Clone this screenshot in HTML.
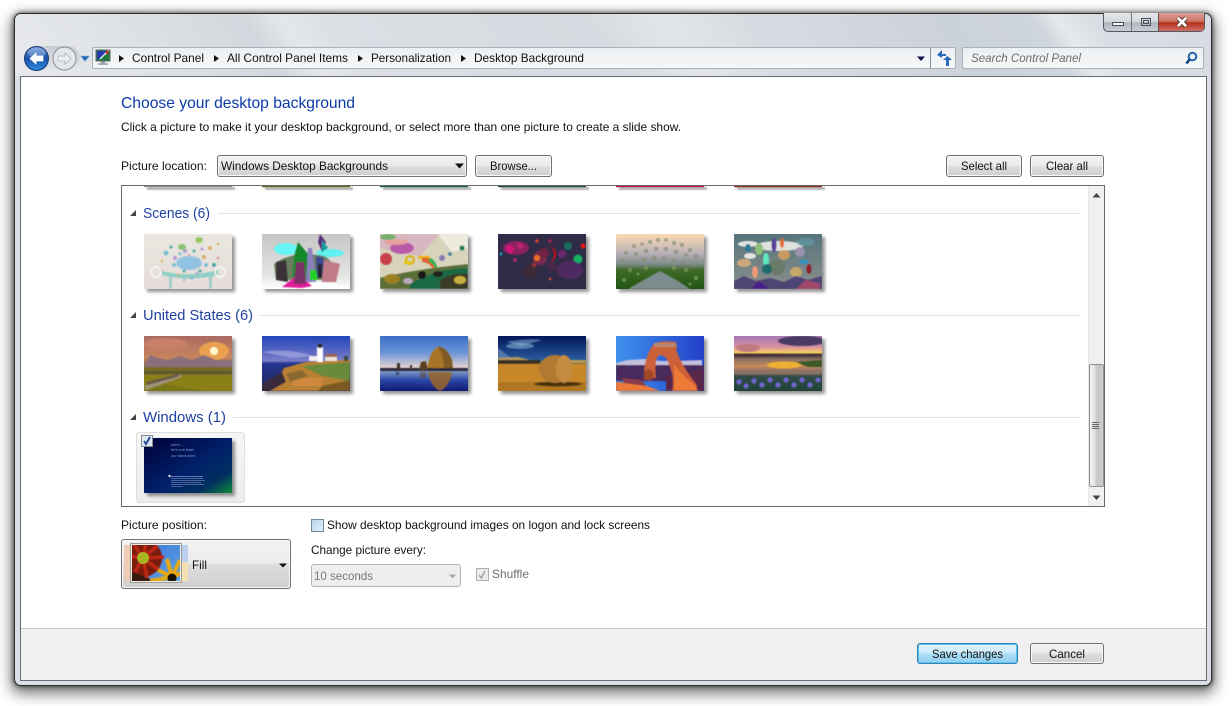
<!DOCTYPE html>
<html><head><meta charset="utf-8"><title>Desktop Background</title>
<style>
html,body{margin:0;padding:0;width:1232px;height:706px;overflow:hidden;background:#fff}
.a{position:absolute;box-sizing:border-box}
#win{left:14px;top:13px;width:1198px;height:673px;border:1px solid #2b2b2b;border-radius:7px;background:#d9dfe5;box-shadow:0 0 4px 1px rgba(0,0,0,.5),0 5px 14px 3px rgba(0,0,0,.5)}
#glass{left:15px;top:14px;width:1196px;height:62px;border-radius:6px 6px 0 0;
background:linear-gradient(55deg,#e6e8eb 2%,#d9dde2 16.600%,#d2d7dd 21.500%,#e4e7ea 24.700%,#dcdfe4 28%,#d6dbe1 49%,#e2e5e8 55.400%,#d8dce2 62%,#ccd2d9 78%,#cfd5dc 85.300%,#e6e9ec 87.300%,#d9dee4 90%,#d6dce2 98%)}
#content{left:20px;top:76px;width:1187px;height:605px;background:#fff;border:1px solid #656b70}
#foot{left:21px;top:628px;width:1185px;height:52px;background:#f0f0f0;border-top:1px solid #c4c4c4}
.btn{border:1px solid #707070;border-radius:3px;background:linear-gradient(#f2f2f2 0,#ebebeb 48%,#dddddd 52%,#cfcfcf 100%);box-shadow:inset 0 0 0 1px #f8f8f8}
#save{border-color:#3c7fb1;background:linear-gradient(#e3f4fc 0,#c9e9f9 48%,#a9dcf5 52%,#92cff0 100%);box-shadow:inset 0 0 0 1px #52c5f2}
#list{left:121px;top:185px;width:984px;height:322px;border:1px solid #6a6a6a;background:#fff;overflow:hidden}
#caps{left:1103px;top:13px;width:102px;height:19px;border:1px solid #545a60;border-top:0;border-radius:0 0 5px 5px;overflow:hidden;background:linear-gradient(#e4e7ea,#d3d8dd 50%,#b0b7bf 52%,#c9ced4)}
#close{left:54px;top:0;width:46px;height:18px;background:linear-gradient(#dba097 0,#cf7468 45%,#b5301d 55%,#d27166 100%);border-left:1px solid #6a4a48}
#sep{left:27px;top:0;width:1px;height:18px;background:#6f767c}
#addr{left:92px;top:47px;width:864px;height:22px;border:1px solid #a9b0b7;border-radius:2px;background:linear-gradient(#eceff2,#f6f7f8)}
#search{left:962px;top:47px;width:242px;height:22px;border:1px solid #a9b0b7;border-radius:2px;background:linear-gradient(#eceff2,#f6f7f8)}
#navbg{left:24px;top:46px;width:56px;height:24px;border-radius:12px;background:linear-gradient(#c6ccd3,#e2e5e9)}
#sel{left:136px;top:432px;width:109px;height:71px;border:1px solid #dedede;border-radius:3px;background:linear-gradient(#f6f6f6,#ececec)}
#combo{left:217px;top:155px;width:250px;height:22px}
#pos{left:121px;top:539px;width:170px;height:50px}
#dis{left:311px;top:564px;width:150px;height:23px;border:1px solid #b4b4b4;border-radius:3px;background:#eeeeee}
#track{left:1088px;top:186px;width:16px;height:320px;background:#f0f0f0;border-left:1px solid #e6e6e6}
#thumb{left:1089px;top:364px;width:15px;height:123px;border:1px solid #8e8f8f;border-radius:2px;background:linear-gradient(90deg,#f3f3f3 0,#e7e7e7 30%,#c9c9c9 50%,#c6c6c6 85%,#d8d8d8 100%)}
svg{position:absolute;left:0;top:0}
text{font-family:"Liberation Sans",sans-serif;font-size:12px;fill:#111}
.h{font-size:15px;fill:#1f3f9f}
</style></head><body>
<div class="a" id="win"></div>
<div class="a" id="glass"></div>
<div class="a" id="caps"><div class="a" id="sep"></div><div class="a" id="close"></div></div>
<div class="a" id="navbg"></div>
<div class="a" id="addr"></div>
<div class="a" id="search"></div>
<div class="a" id="content"></div>
<div class="a" id="foot"></div>
<div class="a btn" id="combo"></div>
<div class="a btn" style="left:475px;top:155px;width:77px;height:22px"></div>
<div class="a btn" style="left:946px;top:155px;width:76px;height:22px"></div>
<div class="a btn" style="left:1030px;top:155px;width:74px;height:22px"></div>
<div class="a" id="list"></div>
<div class="a" id="track"></div>
<div class="a" id="thumb"></div>
<div class="a" id="sel"></div>
<div class="a btn" id="pos"></div>
<div class="a" id="dis"></div>
<div class="a btn" id="save" style="left:917px;top:643px;width:101px;height:21px"></div>
<div class="a btn" style="left:1030px;top:643px;width:74px;height:21px"></div>

<svg width="1232" height="706" viewBox="0 0 1232 706">
<defs>
<filter id="b" x="-20%" y="-20%" width="140%" height="140%"><feGaussianBlur stdDeviation="0.6"/></filter>
<filter id="b2" x="-30%" y="-30%" width="160%" height="160%"><feGaussianBlur stdDeviation="1.6"/></filter>
<clipPath id="c"><rect width="88" height="55"/></clipPath>
<clipPath id="lc"><rect x="122" y="186" width="966" height="320"/></clipPath>
<clipPath id="pc"><rect x="132" y="545" width="48" height="36"/></clipPath>
<linearGradient id="s1" x1="0" y1="0" x2="0" y2="1"><stop offset="0" stop-color="#e9e7e0"/><stop offset="1" stop-color="#e6dcd9"/></linearGradient>
<linearGradient id="s2" x1="0" y1="0" x2="0" y2="1"><stop offset="0" stop-color="#c6c6c4"/><stop offset=".75" stop-color="#e4e4e2"/><stop offset="1" stop-color="#fff"/></linearGradient>
<linearGradient id="s5" x1="0" y1="0" x2="0" y2="1"><stop offset="0" stop-color="#fcdcb0"/><stop offset=".35" stop-color="#b8b0b8"/><stop offset=".55" stop-color="#7f8a88"/><stop offset=".65" stop-color="#3f6a2a"/><stop offset="1" stop-color="#1f5512"/></linearGradient>
<linearGradient id="u1" x1="0" y1="0" x2="0" y2="1"><stop offset="0" stop-color="#a96a62"/><stop offset=".4" stop-color="#c9855f"/><stop offset=".55" stop-color="#8c6a48"/><stop offset="1" stop-color="#8a7a1a"/></linearGradient>
<linearGradient id="u2" x1="0" y1="0" x2="0" y2="1"><stop offset="0" stop-color="#2246b8"/><stop offset=".45" stop-color="#7b7cc8"/><stop offset=".5" stop-color="#25348e"/><stop offset="1" stop-color="#1f2a60"/></linearGradient>
<linearGradient id="u3" x1="0" y1="0" x2="0" y2="1"><stop offset="0" stop-color="#3b6fc4"/><stop offset=".3" stop-color="#6a94d8"/><stop offset=".58" stop-color="#e4d4d0"/><stop offset=".64" stop-color="#7f9ac8"/><stop offset=".8" stop-color="#2a48a8"/><stop offset="1" stop-color="#101a70"/></linearGradient>
<linearGradient id="u4" x1="0" y1="0" x2="0" y2="1"><stop offset="0" stop-color="#02175a"/><stop offset=".45" stop-color="#2c5da0"/><stop offset=".5" stop-color="#8a6a30"/><stop offset="1" stop-color="#c08024"/></linearGradient>
<linearGradient id="u5" x1="0" y1="0" x2="1" y2="0"><stop offset="0" stop-color="#3f92ee"/><stop offset="1" stop-color="#2240c8"/></linearGradient>
<linearGradient id="u6" x1="0" y1="0" x2="0" y2="1"><stop offset="0" stop-color="#a67ab8"/><stop offset=".2" stop-color="#d890a0"/><stop offset=".3" stop-color="#f8d060"/><stop offset=".34" stop-color="#3a2a34"/><stop offset=".42" stop-color="#8a7060"/><stop offset=".55" stop-color="#c88a5a"/><stop offset=".7" stop-color="#5a5a70"/><stop offset="1" stop-color="#1a3a30"/></linearGradient>
<linearGradient id="w1" x1="0" y1="0" x2="1" y2="1"><stop offset="0" stop-color="#000038"/><stop offset=".55" stop-color="#00206a"/><stop offset=".8" stop-color="#00305f"/><stop offset="1" stop-color="#0f8a3a"/></linearGradient>
<linearGradient id="g6" x1="0" y1="0" x2="0" y2="1"><stop offset="0" stop-color="#56757c"/><stop offset="1" stop-color="#8a8f8c"/></linearGradient>
<linearGradient id="posb" x1="0" y1="0" x2="1" y2="1"><stop offset="0" stop-color="#3f78d8"/><stop offset="1" stop-color="#5aa0e8"/></linearGradient>
<linearGradient id="cb" x1="0" y1="0" x2="1" y2="1"><stop offset="0" stop-color="#b8d4ee"/><stop offset="1" stop-color="#e4f0fa"/></linearGradient>
<linearGradient id="bk" x1="0" y1="0" x2="0" y2="1"><stop offset="0" stop-color="#5f94d8"/><stop offset=".5" stop-color="#1a4fa8"/><stop offset="1" stop-color="#2f8de0"/></linearGradient>

<g id="shadow"><rect x="3" y="3" width="88" height="55" fill="#000" opacity=".42" filter="url(#b2)"/></g>

<g id="t1"><use href="#shadow"/><g clip-path="url(#c)"><rect width="88" height="55" fill="url(#s1)"/><g filter="url(#b)">
<ellipse cx="45" cy="29" rx="13" ry="7" fill="#93c3e2"/><ellipse cx="38" cy="13" rx="4" ry="3" fill="#8cc478"/><ellipse cx="55" cy="6" rx="4" ry="3" fill="#9cc86a"/>
<rect x="25" y="40" width="3" height="15" fill="#a4cdc9"/><rect x="65" y="40" width="3" height="15" fill="#a4cdc9"/><path d="M18 37Q45 44 74 36V41Q45 48 18 41Z" fill="#8fcfc4"/>
<g fill="#7ac0d8"><circle cx="22" cy="19" r="2.500"/><circle cx="30" cy="31" r="2"/><circle cx="36" cy="20" r="1.500"/><circle cx="62" cy="31" r="2"/><circle cx="48" cy="44" r="1.500"/><circle cx="40" cy="46" r="1.200"/></g>
<g fill="#d8b060"><circle cx="66" cy="14" r="2"/><circle cx="60" cy="23" r="2"/><circle cx="74" cy="10" r="1.200"/><circle cx="18" cy="27" r="1.300"/><circle cx="34" cy="41" r="1.200"/></g>
<g fill="#b09cd0"><circle cx="31" cy="24" r="2"/><circle cx="41" cy="17" r="2"/><circle cx="58" cy="15" r="1.500"/><circle cx="53" cy="39" r="1.300"/></g>
<g fill="#e0a0a8"><circle cx="17" cy="36" r="1.500"/><circle cx="74" cy="24" r="1.500"/><circle cx="45" cy="21" r="1.300"/></g>
<g fill="#50a8a0"><circle cx="50" cy="17" r="1.500"/><circle cx="27" cy="13" r="1.500"/><circle cx="70" cy="31" r="2"/><circle cx="40" cy="37" r="1.500"/><circle cx="56" cy="37" r="1.500"/></g>
<circle cx="12" cy="38" r="5" fill="none" stroke="#f8f6f2" stroke-width="1.500"/><circle cx="76" cy="38" r="5" fill="none" stroke="#f8f6f2" stroke-width="1.500"/>
</g></g></g>

<g id="t2"><use href="#shadow"/><g clip-path="url(#c)"><rect width="88" height="55" fill="url(#s2)"/><g filter="url(#b)">
<ellipse cx="24" cy="15" rx="12" ry="6" fill="#66f4f4"/><ellipse cx="68" cy="19" rx="14" ry="4" fill="#60f0f0"/>
<path d="M12 30Q30 16 62 22 74 28 72 46L14 46Z" fill="#6a7f60"/><path d="M36 8L46 20 50 46 30 46 32 22Z" fill="#16882c"/><path d="M58 0L64 8 60 18 56 8Z" fill="#5a2a78"/><path d="M60 6L66 14 60 18Z" fill="#10a0a0"/>
<path d="M46 14L50 14 54 48 44 48Z" fill="#8a80c0"/><path d="M14 28L24 26 26 48 14 46Z" fill="#3a3038"/><path d="M62 26L78 30 74 48 60 48Z" fill="#c07a88"/><path d="M54 22L62 24 60 44 54 44Z" fill="#3a4a8a"/>
<path d="M24 50L36 40 50 52 40 54 20 53Z" fill="#e01a9a"/><path d="M34 28L42 28 44 50 32 50Z" fill="#7a3068"/><path d="M48 36L54 36 56 46 48 46Z" fill="#20d020"/><path d="M50 48L72 50 84 53 50 54Z" fill="#fff"/><path d="M56 30L60 30 60 44 56 44Z" fill="#2a2030"/>
</g></g></g>

<g id="t3"><use href="#shadow"/><g clip-path="url(#c)"><rect width="88" height="55" fill="#d8d4bc"/><g filter="url(#b)">
<path d="M0 0H60L40 22 14 18 0 14Z" fill="#d8b8c0"/><path d="M58 0H88V14L72 18Z" fill="#eeeadd"/><ellipse cx="22" cy="14" rx="12" ry="6" fill="#b95aa8"/><ellipse cx="16" cy="8" rx="12" ry="3" fill="#e8a0a0"/><ellipse cx="8" cy="3" rx="8" ry="3" fill="#78b070"/>
<circle cx="6" cy="25" r="6" fill="#c84048"/><circle cx="30" cy="26" r="4" fill="none" stroke="#d8b010" stroke-width="2"/><rect x="24" y="27" width="7" height="3" fill="#e8c818"/><rect x="38" y="22" width="12" height="3" fill="#f0b018"/>
<path d="M42 24Q54 22 58 36L54 37Q50 28 42 28Z" fill="#e06030"/><path d="M50 24Q56 26 58 36L56 36Q54 30 48 27Z" fill="#30b050"/>
<path d="M0 44Q30 36 88 30V55H0Z" fill="#5a7038"/><path d="M30 50Q56 34 88 34V55H30Z" fill="#1c6a44"/><path d="M60 46Q72 38 88 40V55H60Z" fill="#3a3a28"/><ellipse cx="42" cy="41" rx="4" ry="4" fill="#181818"/><ellipse cx="58" cy="40" rx="5" ry="3" fill="#20201c"/>
<ellipse cx="12" cy="45" rx="8" ry="5" fill="#9a8020"/><ellipse cx="80" cy="46" rx="6" ry="4" fill="#c8b040"/><ellipse cx="28" cy="47" rx="5" ry="3" fill="#b8a8c0"/><circle cx="82" cy="14" r="2.500" fill="#1a7a50"/><circle cx="62" cy="24" r="3" fill="#8a7ab0"/><circle cx="70" cy="20" r="2" fill="#5a8aa0"/>
</g></g></g>

<g id="t4"><use href="#shadow"/><g clip-path="url(#c)"><rect width="88" height="55" fill="#302c48"/><g filter="url(#b)">
<ellipse cx="18" cy="14" rx="13" ry="7" fill="#8a2060"/><circle cx="12" cy="15" r="4" fill="#d01878"/><circle cx="22" cy="12" r="3" fill="#c02068"/><circle cx="42" cy="24" r="7" fill="#7a2a50"/><path d="M50 12A8 8 0 1 1 50 28 6 8 0 0 0 50 12Z" fill="#d81010"/><circle cx="46" cy="19" r="5" fill="#702040"/>
<circle cx="70" cy="12" r="4" fill="#1a6a60"/><circle cx="80" cy="25" r="4.500" fill="#18b060"/><circle cx="85" cy="12" r="2.500" fill="#e81818"/><circle cx="64" cy="20" r="4" fill="#6a2a70"/><circle cx="39" cy="24" r="3" fill="#f07020"/><circle cx="54" cy="32" r="5" fill="#4a2a4a"/>
<ellipse cx="72" cy="36" rx="13" ry="9" fill="#4f2a62"/><circle cx="32" cy="38" r="7" fill="#3a2a38"/><circle cx="36" cy="31" r="2.500" fill="#8a3030"/><circle cx="52" cy="7" r="1.800" fill="#a02050"/><circle cx="39" cy="7" r="1.800" fill="#d04040"/><circle cx="3" cy="20" r="1.500" fill="#2090b0"/><circle cx="52" cy="45" r="1.300" fill="#e05030"/><circle cx="17" cy="26" r="2" fill="#a02a70"/>
</g></g></g>

<g id="t5"><use href="#shadow"/><g clip-path="url(#c)"><rect width="88" height="55" fill="url(#s5)"/><g filter="url(#b)">
<g fill="#8a8f78" opacity=".75"><circle cx="18" cy="12" r="2"/><circle cx="26" cy="10" r="1.800"/><circle cx="34" cy="8" r="2"/><circle cx="42" cy="6" r="2"/><circle cx="50" cy="6" r="1.800"/><circle cx="58" cy="9" r="2"/><circle cx="66" cy="11" r="2"/><circle cx="74" cy="16" r="2"/><circle cx="10" cy="19" r="2"/><circle cx="20" cy="20" r="2.200"/><circle cx="30" cy="17" r="2.200"/><circle cx="40" cy="15" r="2"/><circle cx="50" cy="15" r="2.200"/><circle cx="60" cy="18" r="2.200"/><circle cx="70" cy="21" r="2"/><circle cx="80" cy="22" r="2"/><circle cx="6" cy="27" r="2"/><circle cx="16" cy="28" r="2"/><circle cx="28" cy="26" r="2.500"/><circle cx="38" cy="24" r="2.500"/><circle cx="48" cy="25" r="2.500"/><circle cx="58" cy="27" r="2.500"/><circle cx="68" cy="28" r="2"/><circle cx="78" cy="30" r="2"/></g>
<path d="M44 37L62 47 74 55H12L26 47Z" fill="#7d8c8c"/><g fill="#7f9a58" opacity=".8"><circle cx="14" cy="36" r="2"/><circle cx="70" cy="36" r="2"/><circle cx="80" cy="44" r="2"/><circle cx="8" cy="46" r="2"/><circle cx="30" cy="34" r="2"/><circle cx="58" cy="34" r="2"/><circle cx="74" cy="50" r="1.500"/><circle cx="22" cy="40" r="1.500"/></g>
</g></g></g>

<g id="t6"><use href="#shadow"/><g clip-path="url(#c)"><rect width="88" height="55" fill="url(#g6)"/><g filter="url(#b)">
<ellipse cx="45" cy="12" rx="24" ry="5" fill="#dfe2dc"/><ellipse cx="14" cy="10" rx="10" ry="3" fill="#e2e6e2"/><ellipse cx="72" cy="8" rx="9" ry="4" fill="#5f8f98"/>
<ellipse cx="25" cy="15" rx="4" ry="6" fill="#8cbf78"/><ellipse cx="40" cy="11" rx="2.500" ry="7" fill="#5a3f9a"/><ellipse cx="48" cy="9" rx="2" ry="5" fill="#e86a30"/><ellipse cx="21" cy="38" rx="3" ry="6" fill="#f09a78"/><ellipse cx="32" cy="26" rx="3" ry="7" fill="#60e8c0"/><circle cx="43" cy="33" r="8" fill="#6a7a68"/><circle cx="33" cy="35" r="5" fill="#1a6a6a"/><ellipse cx="50" cy="21" rx="6" ry="5" fill="#c89a60"/><ellipse cx="66" cy="18" rx="5" ry="5" fill="#9a92b0"/><ellipse cx="75" cy="35" rx="2.500" ry="5" fill="#8a2028"/><ellipse cx="62" cy="38" rx="6" ry="5" fill="#c8a868"/><ellipse cx="10" cy="29" rx="7" ry="4" fill="#caa878"/><ellipse cx="16" cy="22" rx="6" ry="3" fill="#e4e4dc"/><ellipse cx="70" cy="28" rx="5" ry="2.500" fill="#3a90c0"/><ellipse cx="14" cy="14" rx="3" ry="4" fill="#2a7a98"/>
<path d="M0 55V47L10 42 22 47 36 44 50 48 62 42 74 46 88 42V55Z" fill="#4f4474"/><path d="M62 55L72 46 86 50V55Z" fill="#a04a6a"/><path d="M18 55L24 47 36 55Z" fill="#4a1f88"/>
</g></g></g>

<g id="a1"><use href="#shadow"/><g clip-path="url(#c)"><rect width="88" height="55" fill="url(#u1)"/><g filter="url(#b)">
<ellipse cx="22" cy="8" rx="22" ry="6" fill="#c88068"/><ellipse cx="70" cy="15" rx="15" ry="9" fill="#eaa050"/><circle cx="70" cy="15" r="4" fill="#fff8d0"/>
<path d="M0 30L6 19 14 22 24 24 36 20 48 24 60 19 72 24 88 24V32H0Z" fill="#8a6f7c"/><rect y="31" width="88" height="6" fill="#7a6a28"/><rect y="35" width="88" height="3" fill="#5a5a28"/><rect y="39" width="88" height="16" fill="#8a8018"/>
<path d="M0 50L36 38 38 41 2 54Z" fill="#a09478"/><path d="M2 46L34 38 36 40 4 49Z" fill="#6a5a48"/><path d="M0 55L20 48 60 55Z" fill="#6a6a18" opacity=".5"/>
</g></g></g>

<g id="a2"><use href="#shadow"/><g clip-path="url(#c)"><rect width="88" height="55" fill="url(#u2)"/><g filter="url(#b)">
<path d="M0 16Q30 12 50 20L30 22Z" fill="#a0a8e0" opacity=".7"/>
<path d="M0 55L12 50 22 32 44 26 88 24V55Z" fill="#b88030"/><path d="M40 30L88 26V45L60 40Z" fill="#6a8a3a"/><path d="M0 48L20 36 24 46 8 55H0Z" fill="#3a2a3a"/><path d="M30 42H60V50H30Z" fill="#d08a40"/><path d="M24 38L40 34 46 40 28 46Z" fill="#8a6a30"/><path d="M60 50L88 44V55H56Z" fill="#7a5a24"/>
<rect x="55" y="11" width="6" height="15" fill="#fff"/><rect x="56" y="8" width="4" height="4" fill="#302020"/><rect x="47" y="20" width="9" height="5" fill="#eee"/><rect x="63" y="18" width="12" height="7" fill="#a06050"/><rect x="63" y="21" width="12" height="4" fill="#ece4dc"/><rect x="82" y="20" width="4" height="5" fill="#3a4a3a"/>
</g></g></g>

<g id="a3"><use href="#shadow"/><g clip-path="url(#c)"><rect width="88" height="55" fill="url(#u3)"/><g filter="url(#b)">
<path d="M47 33Q50 14 58 11 66 10 72 24L73 33Z" fill="#a87426"/><path d="M58 11Q66 10 72 24L73 33H64Q64 20 58 11Z" fill="#7f5a20"/>
<path d="M48 36Q50 50 60 55 70 50 72 36Z" fill="#9a6424" opacity=".85"/><rect y="32" width="88" height="3" fill="#2a2a3a"/><rect x="17" y="27" width="3" height="7" fill="#3a3028"/><rect x="30" y="29" width="2" height="5" fill="#3a3028"/><path d="M39 34L41 26 46 25 48 34Z" fill="#5a4020"/><rect x="40" y="36" width="6" height="6" fill="#5a4020" opacity=".5"/><rect x="16" y="36" width="3" height="3" fill="#2a2a3a" opacity=".6"/>
</g></g></g>

<g id="a4"><use href="#shadow"/><g clip-path="url(#c)"><rect width="88" height="55" fill="url(#u4)"/><g filter="url(#b)">
<path d="M8 6Q30 2 44 4L24 10Z" fill="#7aa0c8" opacity=".6"/><ellipse cx="22" cy="10" rx="14" ry="3" fill="#8ab0d0" opacity=".6"/><path d="M0 12L16 24H0Z" fill="#7a9ac0" opacity=".55"/>
<path d="M0 22L20 21 40 26H0Z" fill="#b89a58"/><path d="M0 24H42V28H0Z" fill="#3a3028"/><path d="M72 24H88V27H72Z" fill="#b89a58"/><rect y="28" width="88" height="27" fill="#c8882a"/><rect y="46" width="88" height="9" fill="#b07820"/>
<ellipse cx="60" cy="48" rx="24" ry="2.500" fill="#4a3010"/><ellipse cx="57" cy="33" rx="16" ry="14" fill="#b07a30"/><ellipse cx="66" cy="33" rx="8" ry="14" fill="#c48c40"/>
</g></g></g>

<g id="a5"><use href="#shadow"/><g clip-path="url(#c)"><rect width="88" height="55" fill="url(#u5)"/><g filter="url(#b)">
<path d="M0 27L12 24 30 23 44 25 60 25 86 24V31H0Z" fill="#c4c0dc"/><rect y="29" width="88" height="16" fill="#4a2a5c"/><path d="M50 40L88 34V55H50Z" fill="#5a2548"/><path d="M0 46L26 48 44 55H0Z" fill="#ec7a3a"/><path d="M6 42L26 44 30 50 8 47Z" fill="#8a3a48"/>
<path d="M28 41Q28 20 38 8 44 4 60 6 62 12 60 14 66 30 80 48L82 55H56Q60 40 50 22 46 18 42 20 38 28 40 42Z" fill="#cc6038"/><path d="M58 28Q66 40 80 50V55H58Z" fill="#ee7a38"/><path d="M38 7H60V11H38Z" fill="#b88870"/><path d="M28 36Q34 30 38 38L36 44H28Z" fill="#a04828"/>
</g></g></g>

<g id="a6"><use href="#shadow"/><g clip-path="url(#c)"><rect width="88" height="55" fill="url(#u6)"/><g filter="url(#b)">
<ellipse cx="68" cy="5" rx="24" ry="5" fill="#4a3a62"/><ellipse cx="14" cy="12" rx="12" ry="4" fill="#c07a80"/><ellipse cx="50" cy="29" rx="17" ry="3.500" fill="#eeb030"/><path d="M62 26L88 24V31H74Z" fill="#3a5a28"/><path d="M0 20H50L30 19Z" fill="#3a2a34"/>
<rect y="38" width="88" height="17" fill="#24483a" opacity=".75"/><g fill="#6f66d0"><circle cx="5" cy="46" r="2.500"/><circle cx="12" cy="50" r="2.500"/><circle cx="20" cy="45" r="2.500"/><circle cx="28" cy="49" r="2.500"/><circle cx="36" cy="44" r="2.500"/><circle cx="44" cy="49" r="2.500"/><circle cx="52" cy="44" r="2.500"/><circle cx="60" cy="49" r="2.500"/><circle cx="68" cy="44" r="2.500"/><circle cx="76" cy="49" r="2.500"/><circle cx="84" cy="44" r="2.500"/></g><rect y="35" width="88" height="4" fill="#9a7a60" opacity=".6"/>
</g></g></g>
</defs>

<!-- list content -->
<g clip-path="url(#lc)">
<g fill="#000"><rect x="147" y="187" width="88" height="3" opacity=".28" filter="url(#b)"/><rect x="265" y="187" width="88" height="3" opacity=".28" filter="url(#b)"/><rect x="383" y="187" width="88" height="3" opacity=".28" filter="url(#b)"/><rect x="501" y="187" width="88" height="3" opacity=".28" filter="url(#b)"/><rect x="619" y="187" width="88" height="3" opacity=".28" filter="url(#b)"/><rect x="737" y="187" width="88" height="3" opacity=".28" filter="url(#b)"/></g>
<rect x="144" y="186" width="88" height="1.200" fill="#9b8f9a"/><rect x="262" y="186" width="88" height="1.200" fill="#5f6a1e"/><rect x="380" y="186" width="88" height="1.200" fill="#0f5f4a"/><rect x="498" y="186" width="88" height="1.200" fill="#1f4a3c"/><rect x="616" y="186" width="88" height="1.200" fill="#b8123a"/><rect x="734" y="186" width="88" height="1.200" fill="#902418"/>

<use href="#t1" x="144" y="234"/><use href="#t2" x="262" y="234"/><use href="#t3" x="380" y="234"/><use href="#t4" x="498" y="234"/><use href="#t5" x="616" y="234"/><use href="#t6" x="734" y="234"/>
<use href="#a1" x="144" y="336"/><use href="#a2" x="262" y="336"/><use href="#a3" x="380" y="336"/><use href="#a4" x="498" y="336"/><use href="#a5" x="616" y="336"/><use href="#a6" x="734" y="336"/>
</g>

<rect x="218" y="213" width="862" height="1" fill="#e3e3e3"/>
<rect x="260" y="315" width="820" height="1" fill="#e3e3e3"/>
<rect x="233" y="417" width="847" height="1" fill="#e3e3e3"/>
<path d="M130 216L136 216 136 210Z" fill="#444"/><path d="M130 318L136 318 136 312Z" fill="#444"/><path d="M130 420L136 420 136 414Z" fill="#444"/>
<text class="h" x="143" y="218" textLength="67" lengthAdjust="spacingAndGlyphs">Scenes (6)</text>
<text class="h" x="143" y="320" textLength="110" lengthAdjust="spacingAndGlyphs">United States (6)</text>
<text class="h" x="143" y="422" textLength="83" lengthAdjust="spacingAndGlyphs">Windows (1)</text>

<!-- windows thumb -->
<rect x="147" y="441" width="88" height="55" fill="#000" opacity=".42" filter="url(#b2)"/>
<rect x="144" y="438" width="88" height="55" fill="url(#w1)"/>
<text x="171" y="446" style="font-size:4px;fill:#8a9ac8">shhh...</text>
<text x="171" y="451" style="font-size:4px;fill:#8a9ac8">let's not leak*</text>
<text x="171" y="457" style="font-size:4px;fill:#8a9ac8">our hard work</text>
<g fill="#7f8fc0"><circle cx="169.500" cy="476" r="1.200" fill="#dde"/><rect x="171" y="476" width="32" height="1" opacity=".8"/><rect x="171" y="478" width="32" height="1" opacity=".6"/><rect x="171" y="480" width="34" height="1" opacity=".6"/><rect x="171" y="482" width="30" height="1" opacity=".6"/><rect x="171" y="484" width="33" height="1" opacity=".6"/><rect x="171" y="486" width="12" height="1" opacity=".5"/></g>
<rect x="141.500" y="435.500" width="11" height="11" fill="#dfe8f6" stroke="#8a8a8a" stroke-width="1"/>
<path d="M144 441L146 444 150 437" fill="none" stroke="#2a4a9a" stroke-width="2"/>

<!-- caption glyphs -->
<rect x="1112.500" y="22.500" width="11" height="3" fill="#f4f6f8" stroke="#4a5058"/>
<rect x="1141.500" y="18.500" width="9" height="7" fill="none" stroke="#4a5058"/><rect x="1143.500" y="20.500" width="5" height="3" fill="none" stroke="#4a5058"/>
<path d="M1178 18L1186 26M1186 18L1178 26" stroke="#4a2a28" stroke-width="4.500"/><path d="M1178 18L1186 26M1186 18L1178 26" stroke="#fff" stroke-width="2.800"/>

<!-- nav -->
<circle cx="36.500" cy="58.500" r="12" fill="url(#bk)" stroke="#1a3a70"/>
<ellipse cx="36.500" cy="52.500" rx="9" ry="5" fill="#fff" opacity=".25"/>
<path d="M30 58.500L36 53V56H43V61H36V64Z" fill="#fff" stroke="#fff" stroke-width=".8"/>
<circle cx="64.500" cy="58.500" r="11.500" fill="#e4e8ec" stroke="#8b9096"/>
<path d="M71 58.500L65 53V56H58V61H65V64Z" fill="#eef1f4" stroke="#b8bec4"/>
<path d="M80.500 56H89.500L85 61.500Z" fill="#2a6ab0" stroke="#8ac0e8" stroke-width=".6"/>

<!-- address icon -->
<rect x="96" y="50" width="14" height="11" fill="#1a7a3a" stroke="#606870"/>
<path d="M97 51H109L97 60Z" fill="#2838b0"/><path d="M100 59L109 50" stroke="#e8e8f0" stroke-width="1.500"/><path d="M105 52L109 50 108 55Z" fill="#d03030"/>
<rect x="101" y="61" width="4" height="2" fill="#8a9098"/><rect x="98" y="63" width="10" height="2" fill="#aab0b6"/>
<path d="M119 55L124 58.500 119 62Z" fill="#111"/><path d="M214 55L219 58.500 214 62Z" fill="#111"/><path d="M358 55L363 58.500 358 62Z" fill="#111"/><path d="M461 55L466 58.500 461 62Z" fill="#111"/>
<text x="132" y="62" textLength="72" lengthAdjust="spacingAndGlyphs">Control Panel</text>
<text x="227" y="62" textLength="121" lengthAdjust="spacingAndGlyphs">All Control Panel Items</text>
<text x="371" y="62" textLength="80" lengthAdjust="spacingAndGlyphs">Personalization</text>
<text x="474" y="62" textLength="110" lengthAdjust="spacingAndGlyphs">Desktop Background</text>
<path d="M917 56.500H925L921 61Z" fill="#10104a"/>
<rect x="930" y="48" width="1" height="20" fill="#8a929a"/>
<path d="M942 50L937 55 942 58V56H946V54H942Z" fill="#2a6ab8"/><path d="M946 66V60H943L947.500 56 952 60H949V66Z" fill="#2a6ab8"/>
<text x="971" y="62" textLength="110" lengthAdjust="spacingAndGlyphs" font-style="italic" style="fill:#6d6d6d">Search Control Panel</text>
<circle cx="1192.500" cy="56.500" r="3.800" fill="none" stroke="#1f62ab" stroke-width="2"/><path d="M1189.500 59.500L1186.500 63.500" stroke="#123f80" stroke-width="2.500"/>

<!-- header text -->
<text x="121" y="108" textLength="234" lengthAdjust="spacingAndGlyphs" style="font-size:16px;fill:#0a3aa8">Choose your desktop background</text>
<text x="121" y="131" textLength="560" lengthAdjust="spacingAndGlyphs">Click a picture to make it your desktop background, or select more than one picture to create a slide show.</text>
<text x="121" y="170" textLength="86" lengthAdjust="spacingAndGlyphs">Picture location:</text>
<text x="221" y="170" textLength="167" lengthAdjust="spacingAndGlyphs">Windows Desktop Backgrounds</text>
<path d="M455 163.500H464L459.500 168.500Z" fill="#111"/>
<text x="490" y="170" textLength="47" lengthAdjust="spacingAndGlyphs">Browse...</text>
<text x="961" y="170" textLength="46" lengthAdjust="spacingAndGlyphs">Select all</text>
<text x="1046" y="170" textLength="42" lengthAdjust="spacingAndGlyphs">Clear all</text>

<!-- scrollbar glyphs -->
<path d="M1092.500 197.500H1100.500L1096.500 193Z" fill="#444"/><path d="M1092.500 495.500H1100.500L1096.500 500Z" fill="#444"/>
<g fill="#666"><rect x="1092" y="422" width="7" height="1"/><rect x="1092" y="424" width="7" height="1"/><rect x="1092" y="426" width="7" height="1"/><rect x="1092" y="428" width="7" height="1"/></g>

<!-- bottom controls -->
<text x="121" y="529" textLength="86" lengthAdjust="spacingAndGlyphs">Picture position:</text>
<rect x="124" y="545" width="8" height="36" fill="#efcdb4"/><rect x="180" y="545" width="8" height="17" fill="#bcd0f2"/><rect x="180" y="562" width="8" height="19" fill="#f4e0b0"/>
<rect x="130.500" y="543.500" width="51" height="39" fill="#f0f0ea" stroke="#9a9a90"/>
<g clip-path="url(#pc)"><rect x="132" y="545" width="48" height="36" fill="url(#posb)"/>
<circle cx="143" cy="558" r="19" fill="#7a1a10" filter="url(#b)"/><path d="M132 572L156 581H132Z" fill="#3a1a10"/>
<g stroke="#c02814" stroke-width="3.500" filter="url(#b)"><path d="M143 558L134 545M143 558L146 543M143 558L157 546M143 558L135 572M143 558L147 578M143 558L159 570M143 558L130 556M143 558L164 557"/></g>
<circle cx="143" cy="558" r="6" fill="#a8b420"/>
<g stroke="#eaa810" stroke-width="4" filter="url(#b)"><path d="M172 577L158 570M172 577L167 559M172 577L180 560M172 577L150 581M172 577L184 572"/></g><circle cx="172" cy="578" r="4.500" fill="#1a1408"/></g>
<text x="192" y="569" textLength="15" lengthAdjust="spacingAndGlyphs">Fill</text>
<path d="M279 563.500H287L283 567.500Z" fill="#111"/>

<rect x="311.500" y="519.500" width="12" height="12" fill="url(#cb)" stroke="#6a8aa0"/>
<text x="327" y="529" textLength="323" lengthAdjust="spacingAndGlyphs">Show desktop background images on logon and lock screens</text>
<text x="311" y="554" textLength="115" lengthAdjust="spacingAndGlyphs">Change picture every:</text>
<text x="314" y="580" textLength="59" lengthAdjust="spacingAndGlyphs" style="fill:#7a7a7a">10 seconds</text>
<path d="M449 574.500H456L452.500 578.500Z" fill="#a8a8a8"/>
<rect x="476.500" y="568.500" width="12" height="12" fill="#ececec" stroke="#b0b0b0"/>
<path d="M479 575L481.500 578 485 571" fill="none" stroke="#a4a4a4" stroke-width="1.500"/>
<text x="492" y="578" textLength="37" lengthAdjust="spacingAndGlyphs" style="fill:#6d6d6d">Shuffle</text>

<text x="932" y="658" textLength="71" lengthAdjust="spacingAndGlyphs">Save changes</text>
<text x="1049" y="658" textLength="36" lengthAdjust="spacingAndGlyphs">Cancel</text>
</svg>
</body></html>
